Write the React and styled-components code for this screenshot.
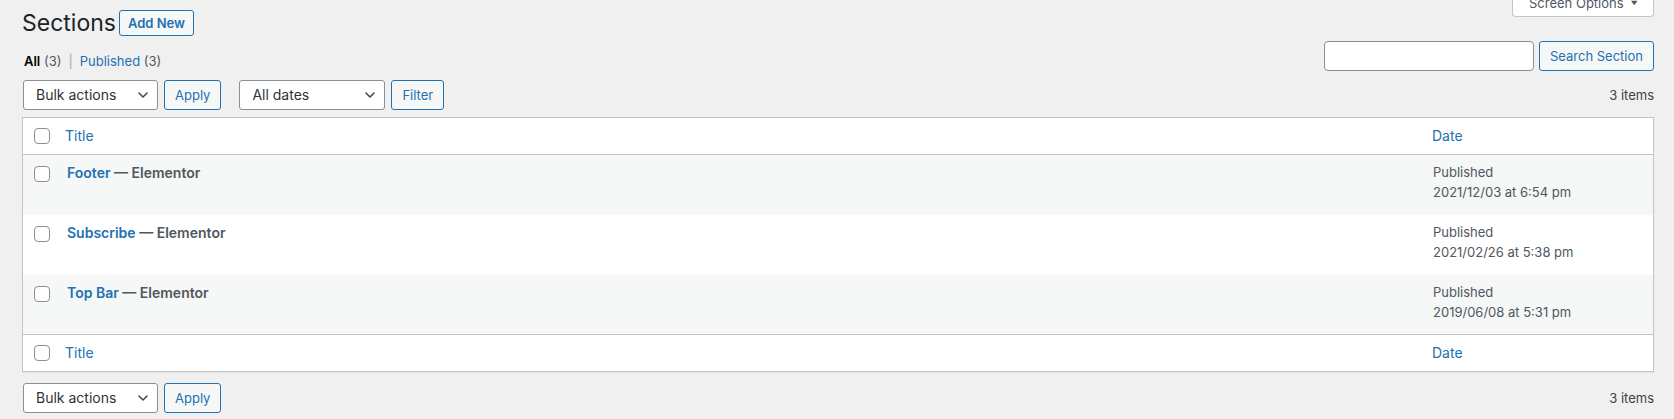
import React from 'react'
import styled, { createGlobalStyle } from 'styled-components'

const sections = [
    { title: 'Footer', state: 'Elementor', date: '2021/12/03 at 6:54 pm' },
    { title: 'Subscribe', state: 'Elementor', date: '2021/02/26 at 5:38 pm' },
    { title: 'Top Bar', state: 'Elementor', date: '2019/06/08 at 5:31 pm' },
]

const Chevron = () => (
    <svg width="10" height="6" viewBox="0 0 10 6" fill="none">
        <path d="M1 1l4 4 4-4" stroke="#3c434a" strokeWidth="1.5" strokeLinecap="round" strokeLinejoin="round" />
    </svg>
)

const Select = ({ label, width }) => (
    <SelectBox $width={width}>
        <span>{label}</span>
        <Chevron />
    </SelectBox>
)

const Tablenav = ({ withFilter, gap }) => (
    <Nav $gap={gap}>
        <Select label="Bulk actions" width={135} />
        <Button>Apply</Button>
        {withFilter && (
            <Actions>
                <Select label="All dates" width={146} />
                <Button>Filter</Button>
            </Actions>
        )}
        <Count>3 items</Count>
    </Nav>
)

const HeadRow = ({ foot }) => (
    <Row $edge={foot ? 'top' : 'bottom'} $height={36}>
        <CheckCell $center>
            <Checkbox type="checkbox" />
        </CheckCell>
        <HeadCell>
            <a>Title</a>
        </HeadCell>
        <HeadCell>
            <a>Date</a>
        </HeadCell>
    </Row>
)

const App = () => {
    return (
        <>
            <GlobalStyle />
            <Wrap>
                <HeaderRow>
                    <TitleGroup>
                        <Heading>Sections</Heading>
                        <AddNew>Add New</AddNew>
                    </TitleGroup>
                    <ScreenOptions>
                        Screen Options
                        <svg width="9" height="6" viewBox="0 0 9 6">
                            <path d="M0 0h9L4.5 6z" fill="#50575e" />
                        </svg>
                    </ScreenOptions>
                </HeaderRow>

                <SubRow>
                    <Subsub>
                        <Current>All</Current> <CountNum>(3)</CountNum>
                        <Sep>|</Sep>
                        <SubLink>Published</SubLink> <CountNum>(3)</CountNum>
                    </Subsub>
                    <SearchBox>
                        <SearchInput type="search" />
                        <Button>Search Section</Button>
                    </SearchBox>
                </SubRow>

                <Tablenav withFilter gap={9} />

                <Table>
                    <HeadRow />
                    {sections.map((s, i) => (
                        <Row key={s.title} $alt={i % 2 === 0} $height={i === 2 ? 59 : 60}>
                            <CheckCell>
                                <Checkbox type="checkbox" />
                            </CheckCell>
                            <TitleCell>
                                <RowTitle>{s.title}</RowTitle> — {s.state}
                            </TitleCell>
                            <DateCell>
                                Published
                                <br />
                                {s.date}
                            </DateCell>
                        </Row>
                    ))}
                    <HeadRow foot />
                </Table>

                <Tablenav gap={11} />
            </Wrap>
        </>
    )
}

const GlobalStyle = createGlobalStyle`
    html, body {
        margin: 0;
        padding: 0;
    }
    body {
        background: #f0f0f1;
        color: #3c434a;
        font-family: Inter, "Noto Sans", sans-serif;
        font-size: 13px;
        line-height: 1.4em;
        overflow: hidden;
    }
    a {
        color: #2271b1;
        text-decoration: none;
        cursor: pointer;
    }
`

const Wrap = styled.div`
    padding: 0 20px 0 22px;
`

const HeaderRow = styled.div`
    display: flex;
    align-items: flex-start;
`

const TitleGroup = styled.div`
    display: flex;
    align-items: center;
    gap: 3px;
    margin-top: 8px;
`

const Heading = styled.h1`
    margin: 0;
    font-size: 23px;
    font-weight: 400;
    line-height: 30px;
    color: #1d2327;
`

const ScreenOptions = styled.button`
    display: flex;
    align-items: center;
    gap: 7px;
    margin: -11px 0 0 auto;
    height: 28px;
    width: 142px;
    padding: 0 16px;
    box-sizing: border-box;
    background: #fff;
    border: 1px solid #c3c4c7;
    border-top: none;
    border-radius: 0 0 4px 4px;
    font-family: inherit;
    font-size: 13px;
    color: #50575e;
    white-space: nowrap;
`

const Button = styled.button`
    height: 30px;
    padding: 0 10px;
    box-sizing: border-box;
    border: 1px solid #2271b1;
    border-radius: 3px;
    background: #f6f7f7;
    color: #2271b1;
    font-family: inherit;
    font-size: 13px;
    line-height: 28px;
    white-space: nowrap;
    cursor: pointer;
`

const AddNew = styled(Button)`
    height: 26px;
    padding: 0 8px;
    font-weight: 600;
    line-height: 24px;
`

const SubRow = styled.div`
    display: flex;
    justify-content: space-between;
    align-items: flex-start;
    height: 33px;
    box-sizing: border-box;
    padding-top: 3px;
`

const Subsub = styled.div`
    margin: 11px 0 0 2px;
    line-height: 19px;
    font-size: 13px;
    color: #50575e;
`

const Current = styled.span`
    color: #000;
    font-weight: 600;
`

const CountNum = styled.span`
    color: #50575e;
`

const Sep = styled.span`
    color: #a7aaad;
    margin: 0 7px;
`

const SubLink = styled.a``

const SearchBox = styled.div`
    display: flex;
    gap: 5px;
`

const SearchInput = styled.input`
    width: 210px;
    height: 30px;
    box-sizing: border-box;
    border: 1px solid #8c8f94;
    border-radius: 4px;
    background: #fff;
    margin: 0;
`

const Nav = styled.div`
    display: flex;
    align-items: center;
    height: 30px;
    gap: 6px;
    margin-top: ${p => p.$gap}px;
`

const Actions = styled.div`
    display: flex;
    align-items: center;
    gap: 6px;
    margin-left: 11px;
`

const SelectBox = styled.div`
    display: flex;
    align-items: center;
    justify-content: space-between;
    width: ${p => p.$width}px;
    height: 30px;
    box-sizing: border-box;
    padding: 0 9px 0 12px;
    border: 1px solid #8c8f94;
    border-radius: 3px;
    background: #fff;
    color: #2c3338;
    font-size: 14px;
    margin-left: 1px;
`

const Count = styled.span`
    margin-left: auto;
    font-size: 13px;
    color: #3c434a;
`

const Table = styled.div`
    margin-top: 7px;
    background: #fff;
    border: 1px solid #c3c4c7;
    box-shadow: 0 1px 1px rgba(0, 0, 0, 0.04);
`

const Row = styled.div`
    display: grid;
    grid-template-columns: 32px 1fr 231px;
    height: ${p => p.$height}px;
    background: ${p => (p.$alt ? '#f6f7f7' : '#fff')};
    ${p => p.$edge && `border-${p.$edge}: 1px solid #c3c4c7;`}
`

const CheckCell = styled.div`
    display: flex;
    align-items: ${p => (p.$center ? 'center' : 'flex-start')};
    padding: ${p => (p.$center ? '0' : '11px')} 0 0 11px;
`

const Checkbox = styled.input`
    appearance: none;
    width: 16px;
    height: 16px;
    margin: 0;
    border: 1px solid #8c8f94;
    border-radius: 4px;
    background: #fff;
`

const HeadCell = styled.div`
    display: flex;
    align-items: center;
    padding: 0 10px;
    font-size: 14px;
`

const TitleCell = styled.div`
    padding: 7px 10px 0 12px;
    font-size: 14px;
    line-height: 21px;
    font-weight: 600;
    color: #50575e;
`

const RowTitle = styled.a`
    font-weight: 600;
`

const DateCell = styled.div`
    padding: 7px 10px 0 11px;
    font-size: 13px;
    line-height: 20px;
    color: #50575e;
`

export default App
